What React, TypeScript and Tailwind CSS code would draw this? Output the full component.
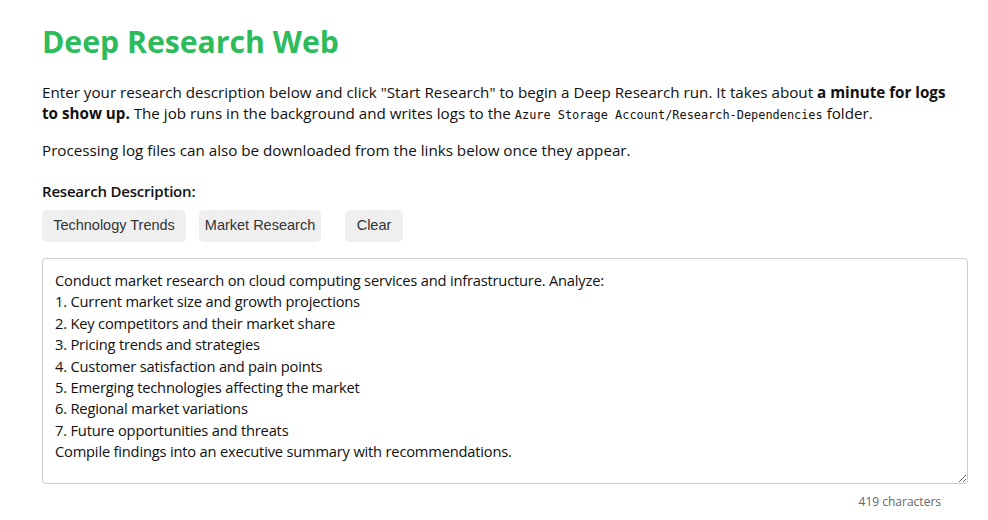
import React from "react";

const text = `Conduct market research on cloud computing services and infrastructure. Analyze:
1. Current market size and growth projections
2. Key competitors and their market share
3. Pricing trends and strategies
4. Customer satisfaction and pain points
5. Emerging technologies affecting the market
6. Regional market variations
7. Future opportunities and threats
Compile findings into an executive summary with recommendations.`;

export default function App() {
  return (
    <div className="min-h-[520px] bg-white px-[42px] pt-[22px] text-[#111] [font-family:'Open_Sans','Noto_Sans',sans-serif]">
      <h1 className="text-[30.2px] font-bold leading-[40px] text-[#2dbb5c]">Deep Research Web</h1>
      <p className="mt-[20px] w-[904px] text-[15.2px] leading-[21px]">
        Enter your research description below and click "Start Research" to begin a Deep Research run. It takes about{" "}
        <strong>a minute for logs to show up.</strong> The job runs in the background and writes logs to the{" "}
        <code className="text-[11.9px] leading-[16px] [font-family:'DejaVu_Sans_Mono',monospace]">Azure Storage Account/Research-Dependencies</code>{" "}
        folder.
      </p>
      <p className="mt-[16px] text-[15.2px] leading-[21px]">
        Processing log files can also be downloaded from the links below once they appear.
      </p>
      <div className="mt-[20px] text-[15px] font-semibold leading-[21px] tracking-[-0.2px]">Research Description:</div>
      <div className="mt-[8px] flex [font-family:'Liberation_Sans',Arial,sans-serif]">
        <button className="h-[32px] w-[144px] rounded-[5px] bg-[#efefef] text-[14.5px] text-[#333]">Technology Trends</button>
        <button className="ml-[13px] h-[32px] w-[122px] rounded-[5px] bg-[#efefef] text-[14.5px] text-[#333]">Market Research</button>
        <button className="ml-[24px] h-[32px] w-[58px] rounded-[5px] bg-[#efefef] text-[14.5px] text-[#333]">Clear</button>
      </div>
      <textarea
        className="mt-[16px] block h-[226px] w-[926px] resize-y rounded-[4px] border border-[#ccc] px-[12px] pb-[10px] pt-[11px] text-[14.7px] leading-[21.4px] tracking-[-0.2px] text-[#111] outline-none"
        defaultValue={text}
      />
      <div className="mt-[10px] w-[926px] pr-[27px] text-right text-[12px] leading-[16px] text-[#666]">419 characters</div>
    </div>
  );
}
